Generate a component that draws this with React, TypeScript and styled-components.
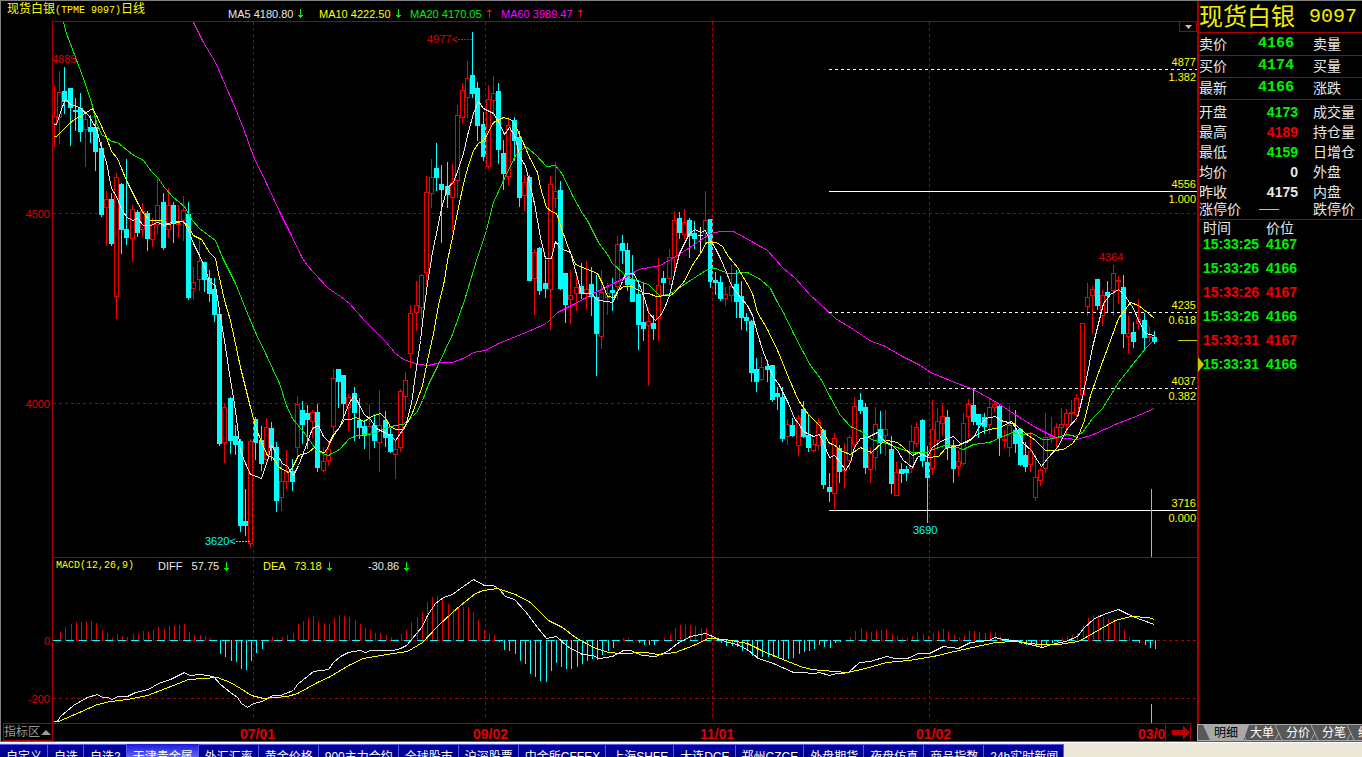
import React from 'react';
import styled, { createGlobalStyle } from 'styled-components';

const RED = '#a80000';
const BRIGHT_RED = '#f00000';
const CYAN = '#00ffff';
const GREEN = '#00f000';
const YELLOW = '#ffff00';
const MAGENTA = '#ff00ff';
const WHITE = '#e8e8e8';
const SANS = `'Liberation Sans', 'Noto Sans CJK SC', sans-serif`;
const MONO = `'Liberation Mono', 'Noto Sans CJK SC', monospace`;

/* Daily bars: kind (r rising, c falling, w doji), x, high, body top, body bottom, low, MACD bar. */
const BARS = `
r54 86 116 123 146 0|r59 71 92 117 143 8|c64 67 91 101 113 13|c70 88 88 107 145 16|c75 98 110 111 130 18|c80 93 108 131 141 18
r85 111 119 129 166 19|c90 115 127 131 142 19|c95 117 127 151 170 17|c101 142 148 214 216 10|r106 191 199 207 245 7|c111 193 199 243 245 2
r116 173 177 296 318 6|c121 183 184 229 253 4|c126 159 229 237 244 3|r132 205 209 238 261 6|c137 210 212 232 236 6|r142 203 211 229 236 9
c147 211 213 238 250 9|r152 218 224 239 246 10|r157 177 205 224 233 13|c163 193 202 247 249 11|r168 188 205 229 237 14|c173 202 205 222 242 15
r178 205 223 224 237 15|r183 196 210 220 240 16|c188 202 214 297 299 8|r193 267 282 288 299 5|r199 237 261 279 290 5|c204 262 262 279 291 4
c209 270 278 293 301 2|c214 278 289 314 321 0|c219 314 314 443 445 -13|r224 403 407 442 462 -16|c230 397 398 440 453 -20|c235 425 436 444 454 -21
c240 439 441 525 531 -28|c245 489 521 525 535 -29|r250 439 441 543 547 -20|c255 417 419 442 459 -12|c261 426 440 463 470 -8|r266 418 427 459 460 0
c271 422 428 447 460 3|c276 442 447 500 511 1|r281 462 481 497 510 3|r286 450 471 481 488 5|c292 459 471 481 490 7|r297 396 404 447 455 16
c302 401 410 424 443 19|c307 405 413 419 448 22|r312 410 412 421 437 24|c317 404 412 467 471 19|r323 447 461 470 471 17|r328 442 449 460 465 16
r333 369 378 426 437 22|c338 369 369 381 407 25|c343 375 375 403 415 24|r348 394 397 407 430 23|c354 387 393 412 440 20|c359 398 420 427 438 16
c364 420 426 435 448 12|r369 404 426 433 459 10|c374 414 425 440 447 7|r379 390 425 442 471 7|c385 411 420 437 446 5|c390 428 434 451 452 3
r395 440 449 454 478 1|r400 389 391 447 451 6|r405 372 380 396 409 10|r410 305 313 353 367 18|r416 281 305 312 330 23|r421 274 275 307 318 28
r426 176 192 272 285 38|r431 159 177 193 207 43|c436 143 168 177 190 44|c441 165 184 189 242 41|c447 162 186 194 207 36|r452 164 182 197 231 31
r457 105 115 180 197 33|r462 83 90 117 122 33|r467 61 78 97 117 33|c472 32 75 93 97 28|c477 82 88 125 140 20|c483 112 124 156 160 10
r488 85 99 166 168 7|r493 76 93 100 115 5|c498 83 91 149 163 -1|c503 140 153 173 189 -9|r508 117 125 176 185 -10|c514 117 120 140 160 -13
c519 131 137 197 206 -20|r524 175 182 195 210 -23|c529 175 177 280 280 -33|r534 249 252 278 314 -36|c539 247 248 290 294 -40|c545 260 283 288 297 -41
r550 176 184 289 329 -30|r555 162 191 198 207 -22|c560 181 190 288 289 -26|c565 273 273 304 322 -28|r570 270 295 299 323 -28|r576 275 287 293 310 -26
c581 263 286 293 298 -23|r586 261 289 293 309 -20|c591 267 284 296 315 -18|c596 275 297 333 375 -19|r601 270 292 336 348 -14|r607 283 293 297 314 -10
c612 278 290 292 310 -7|r617 236 244 286 299 0|c622 235 243 250 263 2|c627 243 250 284 290 2|c632 255 279 301 301 0|c638 280 294 324 349 -2
c643 282 322 328 340 -4|r648 308 321 325 385 -4|c653 315 323 328 339 -4|r658 258 285 318 340 0|c663 271 278 282 295 2|r669 249 257 278 284 6
r674 211 220 257 274 12|c679 212 218 232 238 15|r684 209 222 234 238 16|c689 218 220 235 257 15|c694 221 233 238 248 14|w700 227 235 235 253 12
r705 191 220 233 243 12|c710 219 219 281 287 6|c715 272 280 282 294 2|c720 276 282 298 300 -2|r725 287 294 298 305 -5|r731 265 286 295 301 -5
c736 270 284 301 317 -6|c741 281 296 317 329 -10|c746 313 317 320 330 -10|c751 320 321 372 381 -15|c756 358 369 381 391 -18|r761 357 367 379 380 -16
c767 360 366 369 381 -16|c772 365 365 399 401 -16|c777 387 393 396 409 -16|c782 387 397 438 441 -19|r787 419 424 436 444 -18|c792 418 425 435 436 -17
r798 415 418 445 455 -13|c803 401 409 436 437 -11|c808 415 435 447 451 -10|r813 439 444 450 452 -8|r818 418 422 445 449 -4|c823 429 430 484 488 -6
c829 473 487 491 501 -7|r834 433 438 493 508 -2|c839 445 448 471 482 -1|r844 443 469 470 487 0|r849 435 437 460 469 3|r854 397 406 444 449 9
c860 393 400 410 413 12|c865 403 407 467 473 9|r870 447 453 469 482 8|r875 407 424 457 470 10|c880 411 429 442 453 10|r885 410 429 435 455 11
c891 436 449 483 493 6|r896 462 472 495 495 4|c901 463 469 473 482 2|c906 466 469 472 480 2|r911 425 441 468 472 4|r916 422 427 443 446 8
c922 419 420 460 466 6|c927 446 462 477 522 4|r932 400 429 468 474 7|r937 408 421 440 448 9|r942 403 416 423 435 11|c947 410 417 447 459 9
c953 440 445 468 482 5|r958 450 461 466 475 3|r963 413 423 463 464 5|r968 399 404 416 437 9|c973 389 405 421 424 9|c978 414 414 424 437 8
c984 413 417 426 433 7|r989 399 407 424 433 8|r994 401 404 407 411 8|c999 405 406 437 455 4|r1004 430 439 440 448 2|r1009 406 425 447 456 1
c1015 410 430 443 452 -1|c1020 428 429 464 465 -3|c1025 442 455 466 471 -4|r1030 432 451 464 471 -4|r1035 454 477 497 500 -6|r1040 468 470 480 485 -7
r1045 413 437 468 472 -4|r1051 417 436 437 442 -2|r1056 423 427 438 450 -1|r1061 408 424 427 437 2|r1066 409 413 424 434 4|r1071 400 412 413 423 5
r1076 394 398 414 420 7|r1082 323 323 394 394 15|r1087 283 297 306 315 22|r1092 286 289 295 333 25|c1097 279 279 305 309 25|r1102 290 295 315 325 23
c1107 281 292 295 311 21|r1113 265 273 290 315 20|r1118 276 280 281 303 18|c1123 275 287 333 347 10|r1128 316 333 336 353 3|c1133 322 332 341 347 0
r1138 299 319 323 329 -2|c1144 313 320 337 349 -4|r1149 327 336 337 341 -7|c1154 331 337 341 343 -8`
  .trim()
  .split(/[|\n]/)
  .map((row) => {
    const n = row.slice(1).split(' ').map(Number);
    return { kind: row[0], x: n[0], high: n[1], top: n[2], bottom: n[3], low: n[4], macd: n[5] };
  });

const MA5 =
  '53,124 56,124 60,112 65,98 70,104 79,107 88,115 96,128 101,147 106,162 111,188 116,196 122,211 127,217 132,220 137,218 143,225 150,225 157,222 164,225 173,221 183,221 188,230 193,243 199,255 204,266 209,281 215,285 219,310 224,340 230,380 234,403 240,450 245,463 250,474 256,476 261,478 267,460 271,445 276,453 282,463 287,466 293,475 298,465 305,447 312,428 318,425 323,436 329,442 333,434 339,427 343,417 349,402 354,395 359,405 364,414 370,419 376,428 380,430 390,435 395,440 400,433 406,423 411,403 416,367 420,340 423,313 427,283 432,252 437,228 441,208 447,187 453,182 457,171 463,153 467,135 473,113 478,101 483,108 493,113 499,123 504,134 509,127 514,135 520,158 525,165 529,182 534,203 540,237 545,258 551,258 555,241 560,248 570,252 575,270 581,293 591,293 598,300 607,301 612,302 617,292 622,281 625,273 633,273 638,282 644,298 648,312 655,320 660,315 664,308 669,295 674,273 679,253 684,243 689,233 695,229 700,232 705,230 708,237 715,248 720,258 726,272 731,285 740,297 747,305 752,315 757,333 763,352 767,362 773,377 778,383 783,393 788,403 794,418 798,423 803,431 813,436 819,434 823,443 829,457 834,455 840,462 845,470 850,462 854,447 860,438 867,437 877,432 881,438 886,442 892,445 897,450 903,460 912,467 917,457 922,454 927,456 932,447 942,440 953,436 960,443 967,442 973,437 978,428 985,418 995,416 1000,420 1012,423 1017,430 1023,443 1031,450 1037,460 1041,466 1047,458 1057,447 1067,428 1077,417 1082,397 1087,373 1092,347 1098,323 1103,303 1110,294 1118,289 1125,296 1133,308 1138,320 1145,333 1154,335';
const MA10 =
  '53,136 56,136 66,126 75,118 80,116 86,112 92,108 97,117 106,137 111,151 117,158 126,180 137,202 143,213 149,220 162,220 168,224 182,221 188,226 193,235 201,239 209,252 215,258 218,273 224,300 230,320 240,367 250,407 255,425 261,442 267,455 272,457 279,467 288,472 292,467 298,455 308,452 314,447 318,451 324,452 328,446 333,435 339,427 344,419 350,419 355,417 364,421 371,416 380,413 385,418 390,426 395,429 403,429 411,415 416,402 422,385 427,360 433,333 438,305 444,280 447,260 452,237 457,212 463,183 468,165 473,150 478,143 484,139 493,122 503,117 510,119 514,123 524,145 529,157 537,172 540,187 546,207 551,211 556,213 560,225 567,245 575,264 587,269 597,273 602,283 607,296 613,297 618,290 623,286 632,286 638,290 645,293 648,293 656,296 665,295 670,295 674,292 683,282 693,263 700,253 706,242 716,242 722,246 728,256 737,267 746,282 752,293 757,312 767,329 778,352 788,377 798,400 808,414 820,426 829,443 833,444 842,451 850,454 860,447 871,452 882,442 887,440 897,442 903,447 912,455 918,452 928,457 938,456 945,448 958,445 968,440 980,432 989,429 1000,427 1011,421 1018,427 1025,433 1035,440 1045,450 1053,450 1063,449 1072,443 1078,435 1084,420 1090,395 1097,375 1107,348 1118,318 1130,302 1138,305 1147,312 1154,318';
const MA20 =
  '63,22 66,33 75,57 83,78 91,102 96,122 101,134 106,137 111,141 117,142 132,154 143,160 151,171 158,178 164,187 173,197 184,206 192,220 199,228 215,240 222,257 235,283 241,298 247,313 255,332 267,357 279,383 286,405 292,418 305,434 317,451 328,455 339,449 349,438 357,435 375,433 383,428 395,425 403,424 412,416 417,411 422,400 428,384 437,366 452,334 464,300 470,280 477,257 486,230 493,202 503,180 515,155 525,146 535,154 546,166 555,165 562,174 572,195 582,213 587,220 598,242 607,254 612,263 623,273 633,279 648,284 660,296 670,293 693,278 707,269 715,268 728,273 747,272 760,279 770,288 777,302 783,312 793,333 803,352 810,365 820,378 830,397 840,415 850,426 861,431 871,439 886,443 902,449 912,452 925,452 930,450 947,444 963,449 973,444 989,442 1000,437 1012,432 1020,434 1032,433 1042,439 1048,439 1067,434 1075,436 1082,432 1092,418 1102,408 1118,382 1133,363 1145,348 1154,339';
const MA60 =
  '193,22 203,42 215,62 225,85 235,108 243,128 253,156 267,185 280,213 290,233 302,258 307,265 313,272 328,288 340,296 349,303 365,321 385,341 395,353 403,359 418,364 428,365 440,362 452,362 465,357 473,352 485,350 498,343 523,333 546,323 557,312 573,304 595,292 607,286 627,276 638,269 660,265 680,253 697,242 710,233 720,231 733,231 753,242 767,250 782,267 795,278 810,295 818,302 835,318 853,329 871,341 883,345 902,356 920,365 930,372 957,383 973,389 998,403 1013,413 1035,427 1055,437 1077,439 1093,434 1117,423 1133,417 1154,408';
const DIFF =
  '53,721 57,721 60,716 73,705 87,697 97,694 102,697 107,697 112,699 117,696 127,696 135,692 148,689 158,683 170,679 184,672 189,675 200,674 213,676 220,684 230,692 237,697 241,703 247,707 253,703 262,701 272,695 280,695 293,690 297,684 313,671 328,669 333,662 340,656 348,652 360,650 365,652 370,650 393,650 400,648 406,645 412,638 422,626 427,615 435,603 443,597 452,594 460,588 473,579 484,585 493,585 499,589 505,596 514,599 525,611 537,627 546,638 556,636 567,646 582,654 592,655 599,658 612,656 623,650 630,650 642,655 655,656 667,651 677,643 690,636 705,633 717,638 728,642 737,644 748,650 758,658 773,663 793,672 800,672 814,673 819,672 829,675 836,673 841,673 848,672 859,662 870,661 886,656 895,658 907,658 918,653 929,653 943,646 958,648 970,642 988,640 995,637 1002,639 1015,640 1029,644 1042,647 1051,644 1065,641 1077,636 1083,628 1094,618 1106,613 1118,609 1128,614 1140,619 1154,624';
const DEA =
  '53,721 58,721 72,715 97,704 110,701 127,699 147,695 160,690 173,685 188,679 203,678 217,677 230,682 240,688 251,695 263,698 287,696 297,693 317,682 330,676 348,665 363,658 380,655 400,652 407,651 422,642 437,626 452,612 460,605 475,593 483,590 497,588 515,594 530,602 548,620 562,627 575,637 593,647 608,652 620,653 645,652 658,654 675,652 693,645 708,638 725,639 747,643 763,651 780,658 800,666 811,669 822,670 847,672 865,668 886,662 908,660 933,656 954,651 972,647 995,642 1015,641 1038,644 1058,644 1078,641 1094,632 1115,620 1130,616 1148,617 1154,619';

const MONTHS = [253, 485, 712, 929];
const LEVELS = [
  { y: 69, price: '4877', ratio: '1.382', dash: true },
  { y: 191, price: '4556', ratio: '1.000', dash: false },
  { y: 312, price: '4235', ratio: '0.618', dash: true },
  { y: 388, price: '4037', ratio: '0.382', dash: true },
  { y: 510, price: '3716', ratio: '0.000', dash: false },
];
const DATES = [
  { x: 240, text: '07/01' },
  { x: 473, text: '09/02' },
  { x: 700, text: '11/01' },
  { x: 916, text: '01/02' },
  { x: 1138, text: '03/0' },
];

const GlobalStyle = createGlobalStyle`
  html, body { margin: 0; background: #000; }
  *, *::before, *::after { box-sizing: border-box; }
  button { font: inherit; margin: 0; padding: 0; border: 0; border-radius: 0; cursor: pointer; }
  table { border-collapse: collapse; border-spacing: 0; }
  th, td { padding: 0; font-weight: normal; text-align: left; }
`;

const Terminal = styled.div`
  height: 100vh;
  overflow: hidden;
  display: flex;
  flex-direction: column;
  background: #000;
  color: ${WHITE};
  font: 12px/14px ${SANS};
`;

const Workspace = styled.div`
  display: flex;
  flex: none;
  border-top: 1px solid #808080;
  border-left: 1px solid #808080;
`;

const ChartPanel = styled.main`
  flex: 1;
  min-width: 0;
  display: flex;
  flex-direction: column;
`;

const ChartHeader = styled.header`
  display: flex;
  height: 20px;
  padding-left: 6px;
`;

const ChartTitle = styled.h1`
  width: 221px;
  margin: 0;
  color: ${YELLOW};
  font: 12px/18px ${MONO};
  white-space: nowrap;
`;

const Latin = styled.span`
  font: 10px/14px ${MONO};
`;

const Averages = styled.div`
  display: grid;
  grid-template-columns: repeat(4, 91px);
  padding-top: 5px;
`;

const Reading = styled.span<{ $color: string }>`
  display: flex;
  align-items: center;
  gap: 5px;
  color: ${(p) => p.$color};
  font-size: 11px;
  line-height: 14px;
  white-space: pre;
`;

const Pane = styled.section`
  position: relative;
`;

const Plot = styled.svg`
  display: block;
  width: 100%;
  height: auto;
  shape-rendering: crispEdges;
`;

const PlotText = styled.text`
  font-family: ${SANS};
  font-size: 11px;
`;

const DateText = styled.text`
  font-family: ${SANS};
  font-size: 14px;
  font-weight: bold;
  fill: #e00000;
`;

const PaneMenu = styled.button`
  position: absolute;
  top: 0;
  right: 0;
  width: 18px;
  height: 11px;
  display: flex;
  align-items: center;
  justify-content: center;
  background: #000;
  border: 1px solid ${RED};
`;

const MacdLegend = styled.div`
  position: absolute;
  top: 2px;
  left: 55px;
  display: grid;
  grid-template-columns: 102px 105px 105px 60px;
`;

const TimeAxis = styled.div`
  display: flex;
  height: 19px;
  padding-left: 2px;
  border-bottom: 1px solid #606060;
`;

const AreaButton = styled.button`
  display: flex;
  align-items: center;
  gap: 1px;
  width: 50px;
  background: #000;
  border: 1px solid ${RED};
  color: #989898;
  white-space: nowrap;
`;

const Dates = styled.div`
  flex: 1;
  min-width: 0;
  border-top: 1px solid ${RED};
`;

const NextButton = styled.button`
  display: flex;
  align-items: center;
  justify-content: flex-end;
  width: 26px;
  margin-right: 6px;
  background: #000;
  border: solid ${RED};
  border-width: 1px 1px 0;
`;

const Sidebar = styled.aside`
  width: 165px;
  flex: none;
  display: flex;
  flex-direction: column;
  overflow: hidden;
  border-bottom: 1px solid #606060;
`;

const QuotePanel = styled.div`
  flex: 1;
  border-left: 2px solid ${RED};
`;

const Instrument = styled.h2`
  display: flex;
  align-items: center;
  justify-content: space-between;
  height: 32px;
  margin: 0;
  padding-right: 5px;
  border-bottom: 1px solid ${RED};
  color: #f0f000;
  font: 24px/30px ${SANS};
  white-space: nowrap;
`;

const Code = styled.span`
  font: 20px/30px ${MONO};
`;

const QuoteTable = styled.table`
  width: 100%;
  table-layout: fixed;
`;

const Label = styled.th`
  font-size: 14px;
  white-space: nowrap;
`;

const Price = styled.td<{ $color: string; $big?: boolean }>`
  padding-right: ${(p) => (p.$big ? 4 : 0)}px;
  text-align: right;
  color: ${(p) => p.$color};
  font-family: ${(p) => (p.$big ? MONO : SANS)};
  font-size: ${(p) => (p.$big ? 15 : 14)}px;
  font-weight: bold;
`;

const Blank = styled.td`
  padding-right: 19px;
  text-align: right;
  font-size: 10px;
`;

const LinedRow = styled.tr`
  height: 22px;
  border-bottom: 1px solid ${RED};
  line-height: 18px;
`;

const StatRow = styled.tr`
  height: 20px;
  line-height: 16px;

  & > * { padding-top: 4px; }
`;

const LimitRow = styled.tr`
  height: 20px;
  line-height: 18px;
`;

const QuoteGroup = styled.tbody`
  border-bottom: 1px solid ${RED};
`;

const TickTable = styled.table`
  margin-left: 4px;
`;

const TickHead = styled.th`
  width: 63px;
  font-size: 14px;
  line-height: 17px;
`;

const TickRow = styled.tr<{ $color: string }>`
  height: 24px;
  vertical-align: top;
  color: ${(p) => p.$color};
  font: bold 14px/15px ${SANS};
`;

const TickCell = styled.td`
  position: relative;
  font-weight: bold;
`;

const Marker = styled.svg`
  position: absolute;
  left: -5px;
  top: 0;
`;

const DetailTabs = styled.nav`
  display: flex;
  height: 17px;
  padding-left: 5px;
  background: #585858;
  border: 1px solid #a8a8a8;
  border-right: 0;
`;

const DetailTab = styled.button<{ $active?: boolean }>`
  flex: none;
  width: 46px;
  height: 15px;
  margin-right: -10px;
  background: ${(p) => (p.$active ? '#a8a8a8' : 'none')};
  clip-path: ${(p) => (p.$active ? 'polygon(0 0, 100% 0, 88% 100%, 15% 100%)' : 'none')};
  color: ${(p) => (p.$active ? '#000' : '#fff')};
  line-height: 14px;
`;

const TabEdge = styled.svg`
  flex: none;
  width: 8px;
  margin-right: -8px;
`;

const MarketTabs = styled.nav`
  flex: 1 0 24px;
  display: flex;
  padding-top: 1px;
  background: #ece9d8;
  border-top: 1px solid #fff;
`;

const MarketTab = styled.button<{ $active?: boolean }>`
  flex: none;
  height: 24px;
  padding: 0 5px 0 6px;
  background: ${(p) => (p.$active ? 'linear-gradient(#2020e0, #6c6cf8 14px)' : 'linear-gradient(#0000a8, #000080 14px)')};
  border-top: 1px solid ${(p) => (p.$active ? '#2020e0' : '#5858e8')};
  border-right: 1px solid #5858e8;
  color: #fff;
  font: 12px/20px ${SANS};
  white-space: nowrap;
`;

function Arrow({ up }: { up?: boolean }) {
  return (
    <svg width="5" height="9" viewBox="0 0 5 9" shapeRendering="crispEdges" aria-hidden="true">
      <path
        d={up ? 'M2 0h1v9h-1zM1 1h3v1h-3zM0 2h5v1h-5z' : 'M2 0h1v9h-1zM1 7h3v1h-3zM0 6h5v1h-5z'}
        fill={up ? BRIGHT_RED : GREEN}
      />
    </svg>
  );
}

function Candles() {
  return (
    <g>
      {BARS.map((b) => {
        const color = b.kind === 'r' ? BRIGHT_RED : b.kind === 'c' ? CYAN : WHITE;
        const hollow = b.kind === 'r' && b.bottom - b.top > 1;
        return (
          <g key={b.x} fill={color}>
            <rect x={b.x} y={b.high} width="1" height={b.low - b.high + 1} />
            <rect x={b.x - 2} y={b.top} width="5" height={b.bottom - b.top + 1} />
            {hollow && <rect x={b.x - 1} y={b.top + 1} width="3" height={b.bottom - b.top - 1} fill="#000" />}
          </g>
        );
      })}
    </g>
  );
}

function Line({ points, color }: { points: string; color: string }) {
  return <polyline points={points} fill="none" stroke={color} transform="translate(0.5 0.5)" />;
}

function HLine(p: { x1: number; x2: number; y: number; color: string; dash?: string }) {
  return <path d={`M${p.x1} ${p.y + 0.5}H${p.x2}`} stroke={p.color} strokeDasharray={p.dash} />;
}

function VLine(p: { x: number; y1: number; y2: number; color: string; dash?: string }) {
  return <path d={`M${p.x + 0.5} ${p.y1}V${p.y2}`} stroke={p.color} strokeDasharray={p.dash} />;
}

function PricePlot() {
  return (
    <Plot viewBox="1 21 1196 536" role="img" aria-label="现货白银日线">
      <HLine x1={52} x2={1197} y={21} color={RED} />
      <VLine x={52} y1={21} y2={557} color={RED} />
      <HLine x1={53} x2={1197} y={213} color={RED} dash="3 3" />
      <HLine x1={53} x2={1197} y={403} color={RED} dash="3 3" />
      <Candles />
      {MONTHS.map((x) => (
        <VLine key={x} x={x} y1={22} y2={557} color={RED} dash="3 3" />
      ))}
      <Line points={MA60} color={MAGENTA} />
      <Line points={MA20} color={GREEN} />
      <Line points={MA10} color={YELLOW} />
      <Line points={MA5} color={WHITE} />
      {LEVELS.map((l) => (
        <g key={l.y} fill={YELLOW} textAnchor="end">
          <HLine x1={829} x2={1197} y={l.y} color="#fff" dash={l.dash ? '3 3' : undefined} />
          <PlotText x="1196" y={l.y - 3}>{l.price}</PlotText>
          <PlotText x="1196" y={l.y + 12}>{l.ratio}</PlotText>
        </g>
      ))}
      <HLine x1={1178} x2={1197} y={340} color="#c8c800" />
      <VLine x={1151} y1={489} y2={557} color="#c8c800" />
      <g fill="#e00000">
        <PlotText x="50" y="218" textAnchor="end">4500</PlotText>
        <PlotText x="50" y="408" textAnchor="end">4000</PlotText>
        <PlotText x="52" y="63">4885</PlotText>
        <PlotText x="427" y="43">4977&lt;</PlotText>
        <PlotText x="1099" y="261">4364</PlotText>
      </g>
      <HLine x1={458} x2={472} y={39} color={BRIGHT_RED} dash="2 1" />
      <g fill={CYAN}>
        <PlotText x="205" y="545">3620&lt;</PlotText>
        <PlotText x="913" y="534">3690</PlotText>
      </g>
      <HLine x1={236} x2={250} y={541} color={CYAN} dash="2 1" />
    </Plot>
  );
}

function MacdPlot() {
  return (
    <Plot viewBox="1 557 1196 166" role="img" aria-label="MACD">
      <HLine x1={52} x2={1197} y={557} color={RED} />
      <VLine x={52} y1={557} y2={723} color={RED} />
      <HLine x1={53} x2={1197} y={640} color={RED} dash="3 3" />
      <HLine x1={53} x2={1197} y={698} color={RED} dash="3 3" />
      {MONTHS.map((x) => (
        <VLine key={x} x={x} y1={558} y2={720} color={RED} dash="3 3" />
      ))}
      {BARS.filter((b) => b.macd !== 0).map((b) => (
        <rect
          key={b.x}
          x={b.x + 1}
          y={b.macd > 0 ? 640 - b.macd : 640}
          width="1"
          height={Math.abs(b.macd) + 1}
          fill={b.macd > 0 ? '#e00000' : CYAN}
        />
      ))}
      <HLine x1={53} x2={1156} y={640} color={CYAN} dash="8 5" />
      <Line points={DIFF} color={WHITE} />
      <Line points={DEA} color={YELLOW} />
      <VLine x={1151} y1={704} y2={723} color="#c8c800" />
      <g fill="#e00000" textAnchor="end">
        <PlotText x="50" y="645">0</PlotText>
        <PlotText x="50" y="703">-200</PlotText>
      </g>
    </Plot>
  );
}

const QUOTES = [
  ['卖价', '4166', '卖量'],
  ['买价', '4174', '买量'],
  ['最新', '4166', '涨跌'],
];
const STATS = [
  ['开盘', '4173', GREEN, '成交量'],
  ['最高', '4189', BRIGHT_RED, '持仓量'],
  ['最低', '4159', GREEN, '日增仓'],
  ['均价', '0', WHITE, '外盘'],
  ['昨收', '4175', WHITE, '内盘'],
];
const TICKS = [
  ['15:33:25', '4167', GREEN],
  ['15:33:26', '4166', GREEN],
  ['15:33:26', '4167', BRIGHT_RED],
  ['15:33:26', '4166', GREEN],
  ['15:33:31', '4167', BRIGHT_RED],
  ['15:33:31', '4166', GREEN],
];
const MARKETS = [
  '自定义', '自选', '自选2', '天津贵金属', '外汇汇率', '黄金价格', '900主力合约', '全球股市', '沪深股票',
  '中金所CFFEX', '上海SHFE', '大连DCE', '郑州CZCE', '外盘期货', '夜盘仿真', '商品指数', '24h实时新闻',
];

export default function App() {
  return (
    <Terminal>
      <GlobalStyle />
      <Workspace>
        <ChartPanel>
          <ChartHeader>
            <ChartTitle>
              现货白银<Latin>(TPME 9097)</Latin>日线
            </ChartTitle>
            <Averages>
              <Reading $color={WHITE}>MA5 4180.80<Arrow /></Reading>
              <Reading $color={YELLOW}>MA10 4222.50<Arrow /></Reading>
              <Reading $color={GREEN}>MA20 4170.05<Arrow up /></Reading>
              <Reading $color={MAGENTA}>MA60 3989.47<Arrow up /></Reading>
            </Averages>
          </ChartHeader>
          <Pane>
            <PricePlot />
            <PaneMenu type="button" aria-label="菜单">
              <svg width="7" height="4" viewBox="0 0 7 4" aria-hidden="true">
                <path d="M0 0H7L3.5 4Z" fill="#c0c0c0" />
              </svg>
            </PaneMenu>
          </Pane>
          <Pane>
            <MacdPlot />
            <MacdLegend>
              <Reading $color={YELLOW}><Latin>MACD(12,26,9)</Latin></Reading>
              <Reading $color={WHITE}>{'DIFF   57.75'}<Arrow /></Reading>
              <Reading $color={YELLOW}>{'DEA   73.18'}<Arrow /></Reading>
              <Reading $color={WHITE}>-30.86<Arrow /></Reading>
            </MacdLegend>
          </Pane>
          <TimeAxis>
            <AreaButton type="button">
              指标区
              <svg width="10" height="5" viewBox="0 0 10 5" aria-hidden="true">
                <path d="M0 5H10L5 0Z" fill="#a0a0a0" />
              </svg>
            </AreaButton>
            <Dates>
              <Plot viewBox="53 724 1112 17" role="img" aria-label="日期">
                {DATES.map((d) => (
                  <DateText key={d.x} x={d.x} y="739">{d.text}</DateText>
                ))}
              </Plot>
            </Dates>
            <NextButton type="button" aria-label="下一页">
              <svg width="18" height="13" viewBox="0 0 18 13" shapeRendering="crispEdges" aria-hidden="true">
                <path d="M0 4H11V0L18 6.500L11 13V9H0Z" fill="#b80000" />
              </svg>
            </NextButton>
          </TimeAxis>
        </ChartPanel>
        <Sidebar>
          <QuotePanel>
            <Instrument>
              现货白银 <Code>9097</Code>
            </Instrument>
            <QuoteTable>
              <colgroup>
                <col width="46" />
                <col width="53" />
                <col width="15" />
                <col />
              </colgroup>
              <tbody>
                {QUOTES.map(([a, v, b]) => (
                  <LinedRow key={a}>
                    <Label scope="row">{a}</Label>
                    <Price $color={GREEN} $big>{v}</Price>
                    <td />
                    <Label scope="row">{b}</Label>
                  </LinedRow>
                ))}
              </tbody>
              <QuoteGroup>
                {STATS.map(([a, v, color, b]) => (
                  <StatRow key={a}>
                    <Label scope="row">{a}</Label>
                    <Price $color={color}>{v}</Price>
                    <td />
                    <Label scope="row">{b}</Label>
                  </StatRow>
                ))}
                <LimitRow>
                  <Label scope="row">涨停价</Label>
                  <Blank>——</Blank>
                  <td />
                  <Label scope="row">跌停价</Label>
                </LimitRow>
              </QuoteGroup>
            </QuoteTable>
            <TickTable>
              <thead>
                <tr>
                  <TickHead scope="col">时间</TickHead>
                  <TickHead scope="col">价位</TickHead>
                </tr>
              </thead>
              <tbody>
                {TICKS.map(([time, price, color], i) => (
                  <TickRow key={i} $color={color}>
                    <TickCell>
                      {i === TICKS.length - 1 && (
                        <Marker width="6" height="15" viewBox="0 0 6 15" aria-hidden="true">
                          <path d="M0 0L6 7.500L0 15Z" fill="#c8c800" />
                        </Marker>
                      )}
                      {time}
                    </TickCell>
                    <TickCell>{price}</TickCell>
                  </TickRow>
                ))}
              </tbody>
            </TickTable>
          </QuotePanel>
          <DetailTabs>
            {['明细', '大单', '分价', '分笔', '统计'].map((t, i) => (
              <React.Fragment key={t}>
                {i > 0 && (
                  <TabEdge viewBox="0 0 8 15" aria-hidden="true">
                    <path d="M0 0L7 15M0 15L4 8" fill="none" stroke="#a8a8a8" />
                  </TabEdge>
                )}
                <DetailTab type="button" $active={i === 0}>{t}</DetailTab>
              </React.Fragment>
            ))}
          </DetailTabs>
        </Sidebar>
      </Workspace>
      <MarketTabs>
        {MARKETS.map((m) => (
          <MarketTab key={m} type="button" $active={m === '天津贵金属'}>{m}</MarketTab>
        ))}
      </MarketTabs>
    </Terminal>
  );
}
